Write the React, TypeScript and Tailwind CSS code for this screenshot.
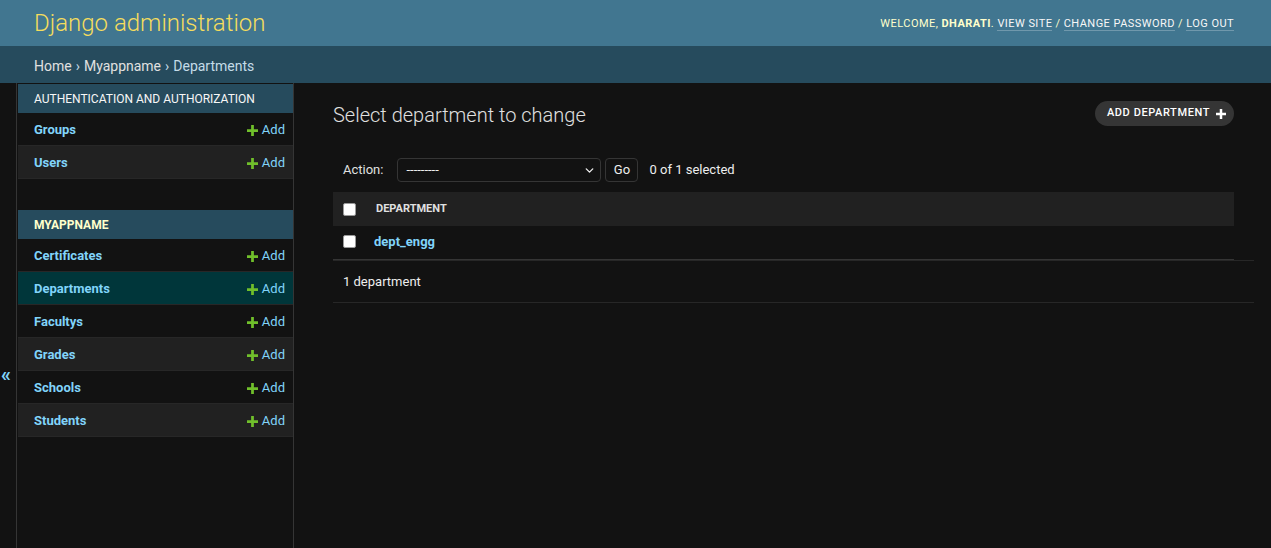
import { ChevronDown } from "lucide-react";

const authModels = ["Groups", "Users"];
const appModels = ["Certificates", "Departments", "Facultys", "Grades", "Schools", "Students"];

function PlusIcon({ className }: { className?: string }) {
  return (
    <svg viewBox="0 0 12 12" className={className}>
      <path d="M4.5 0h3v4.5H12v3H7.5V12h-3V7.5H0v-3h4.5z" fill="currentColor" />
    </svg>
  );
}

function ModelRow({ name, index, current }: { name: string; index: number; current?: boolean }) {
  const bg = current ? "bg-[#00363a]" : index % 2 === 1 ? "bg-[#212121]" : "bg-[#121212]";
  return (
    <div className={`flex h-[33px] items-center justify-between border-b border-[#272727] pl-4 pr-2 pt-[2px] ${bg}`}>
      <a className="text-[13px] font-bold text-[#81d4fa]">{name}</a>
      <a className="flex items-center gap-[4px] text-[13px] text-[#81d4fa]">
        <PlusIcon className="h-[11px] w-[11px] text-[#70bf2b]" />
        Add
      </a>
    </div>
  );
}

function Checkbox() {
  return <span className="block h-[13px] w-[13px] rounded-[2px] border border-[#999] bg-white" />;
}

export default function App() {
  return (
    <div
      className="flex min-h-screen flex-col bg-[#121212] text-[#eeeeee]"
      style={{ fontFamily: "Roboto, 'Liberation Sans', sans-serif" }}
    >
      {/* header */}
      <header className="flex h-[46px] items-center justify-between bg-[#417690] pl-[34px] pr-[37px]">
        <h1 className="text-[24px] font-light text-[#f5dd5d]">Django administration</h1>
        <div className="pt-[2px] text-[11px] uppercase tracking-[0.45px] text-[#ffffcc]">
          Welcome, <strong className="font-bold">Dharati</strong>.{" "}
          <a className="border-b border-white/25 text-[#f7f7f7]">View site</a> /{" "}
          <a className="border-b border-white/25 text-[#f7f7f7]">Change password</a> /{" "}
          <a className="border-b border-white/25 text-[#f7f7f7]">Log out</a>
        </div>
      </header>

      {/* breadcrumbs */}
      <div className="flex h-[37px] items-center bg-[#264b5d] px-[34px] pt-[3px] text-[14px] text-[#c4dce8]">
        <a className="text-[#e0e0e0]">Home</a>
        <span className="mx-[4px]">›</span>
        <a className="text-[#e0e0e0]">Myappname</a>
        <span className="mx-[4px]">›</span>
        <span>Departments</span>
      </div>

      <div className="flex flex-1">
        {/* sidebar toggle */}
        <div className="w-[17px] shrink-0 border-r border-[#353535] pl-px pt-[281px] text-[20px] font-bold leading-[20px] text-[#81d4fa]">
          «
        </div>

        {/* sidebar */}
        <nav className="w-[277px] shrink-0 border-r border-[#353535] pl-px pt-px">
          <div className="mb-[31px]">
            <div className="flex h-[29px] items-center bg-[#264b5d] px-4 text-[12px] uppercase text-[#f7f7f7]">
              Authentication and Authorization
            </div>
            {authModels.map((m, i) => (
              <ModelRow key={m} name={m} index={i} />
            ))}
          </div>
          <div>
            <div className="flex h-[29px] items-center bg-[#264b5d] px-4 pt-px text-[12px] font-bold uppercase text-[#ffffcc]">
              Myappname
            </div>
            {appModels.map((m, i) => (
              <ModelRow key={m} name={m} index={i} current={m === "Departments"} />
            ))}
          </div>
        </nav>

        {/* content */}
        <main className="flex-1 pl-[39px] pr-[37px] pt-[18px]">
          <div className="flex items-start justify-between">
            <h1 className="mt-[2px] text-[20px] font-light leading-[24px] text-[#e0e0e0]">
              Select department to change
            </h1>
            <a className="flex h-[25px] items-center gap-[6px] rounded-full bg-[#353535] pl-[12px] pr-[8px] text-[11px] font-medium uppercase tracking-[0.6px] text-white">
              Add department
              <PlusIcon className="h-[10px] w-[10px] text-white" />
            </a>
          </div>

          <div className="mt-[31px] flex h-[24px] items-center pl-[10px] text-[13px]">
            <span className="mr-[14px] text-[#e0e0e0]">Action:</span>
            <div className="relative flex h-[24px] w-[204px] items-center rounded-[4px] border border-[#353535] pl-[8px] text-[13px]">
              ---------
              <ChevronDown className="absolute right-[4px] top-[5px] h-[13px] w-[13px]" strokeWidth={2.5} />
            </div>
            <button className="ml-[4px] h-[24px] w-[33px] rounded-[4px] border border-[#353535] text-[13px] text-[#eeeeee]">
              Go
            </button>
            <span className="ml-[11px] text-[#eeeeee]">0 of 1 selected</span>
          </div>

          <div className="mt-[10px]">
            <div className="flex h-[34px] items-center bg-[#212121] pl-[10px]">
              <Checkbox />
              <span className="ml-[20px] text-[11px] font-bold uppercase text-[#e0e0e0]">Department</span>
            </div>
            <div className="flex h-[34px] items-center border-b border-[#353535] pb-[2px] pl-[10px]">
              <Checkbox />
              <a className="ml-[18px] text-[13px] font-bold text-[#81d4fa]">dept_engg</a>
            </div>
            <div className="-mr-[20px] flex h-[43px] items-center border-y border-[#272727] pl-[10px] text-[13px] text-[#eeeeee]">
              1 department
            </div>
          </div>
        </main>
      </div>
    </div>
  );
}
